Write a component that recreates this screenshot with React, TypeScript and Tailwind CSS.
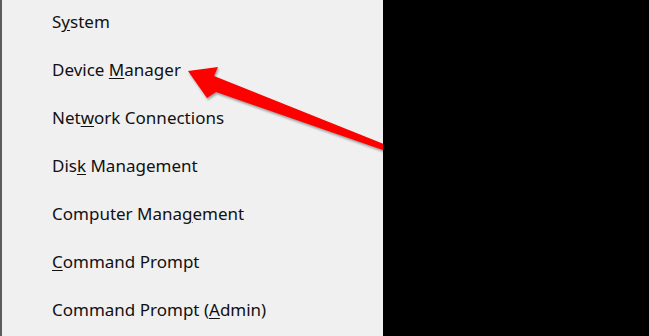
import React from "react";

type Item = { before: string; key: string; after: string };

const items: Item[] = [
  { before: "S", key: "y", after: "stem" },
  { before: "Device ", key: "M", after: "anager" },
  { before: "Net", key: "w", after: "ork Connections" },
  { before: "Dis", key: "k", after: " Management" },
  { before: "Computer Mana", key: "g", after: "ement" },
  { before: "", key: "C", after: "ommand Prompt" },
  { before: "Command Prompt (", key: "A", after: "dmin)" },
];

function Arrow() {
  return (
    <svg
      className="pointer-events-none absolute left-0 top-0"
      width={383}
      height={336}
      viewBox="0 0 383 336"
      style={{ filter: "drop-shadow(1px 2px 1px rgba(0,0,0,0.35))" }}
    >
      <polygon
        points="186,71 216,67 212,76 384,145 384,151 214,92 205,98"
        fill="#ff0000"
      />
    </svg>
  );
}

export default function App() {
  return (
    <div className="flex h-[336px] w-[649px] overflow-hidden bg-black">
      <div className="relative w-[383px] overflow-hidden border-l-2 border-[#5c5c5c] bg-[#f0f0f0]">
        <ul className="-mt-[2px] pl-[50px] font-['Noto_Sans',sans-serif] text-[17px] text-[#111]">
          {items.map((it) => (
            <li key={it.before + it.key} className="flex h-12 items-center">
              <span>
                {it.before}
                <u className="underline-offset-2">{it.key}</u>
                {it.after}
              </span>
            </li>
          ))}
        </ul>
        <Arrow />
      </div>
      <div className="flex-1 bg-black" />
    </div>
  );
}
